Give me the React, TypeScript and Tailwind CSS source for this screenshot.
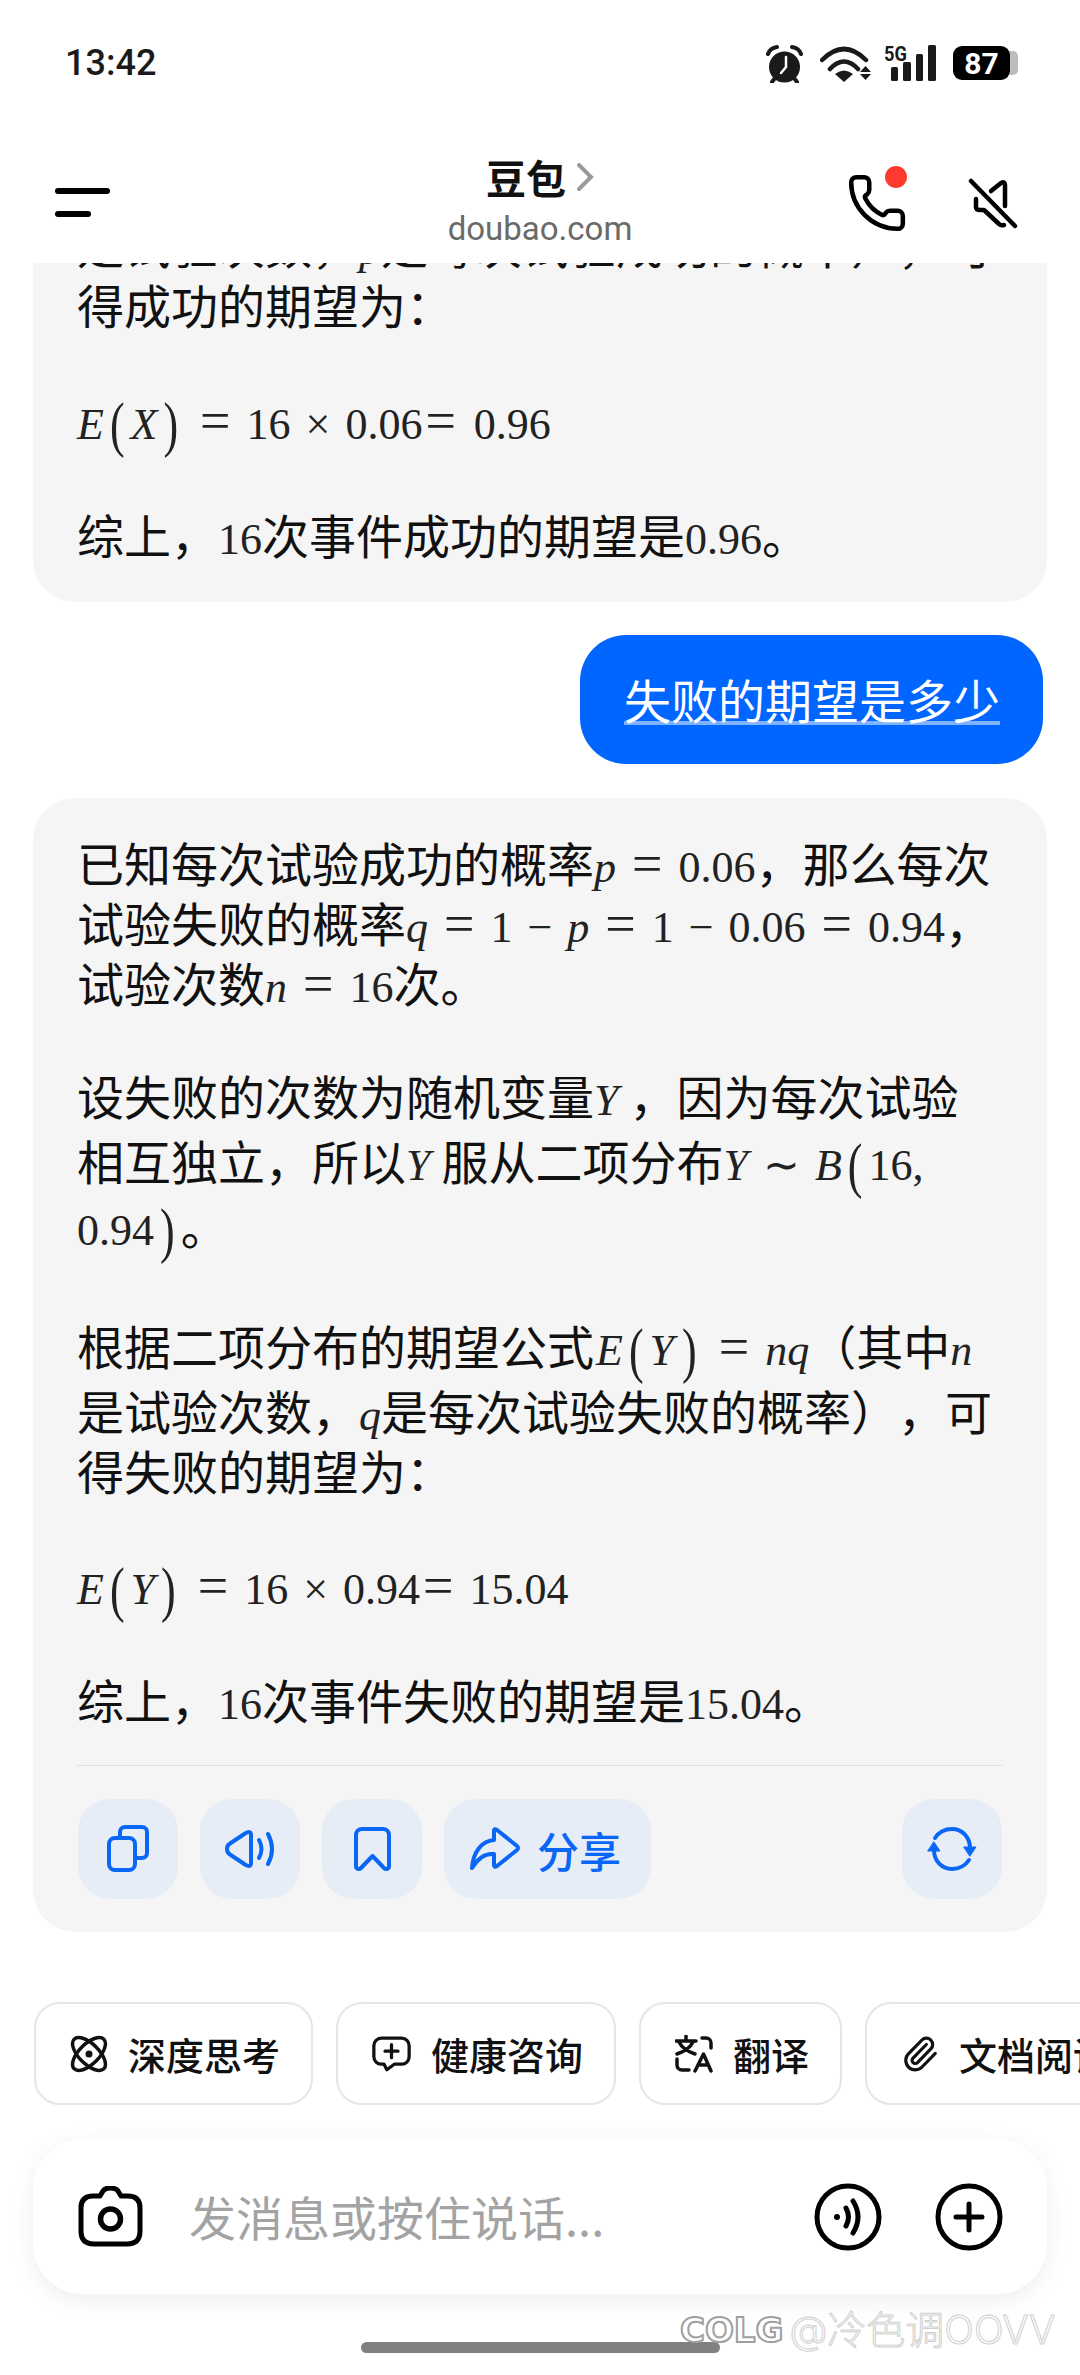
import { Paperclip, Phone } from "lucide-react";
import type { ReactNode } from "react";

function M({ children }: { children: ReactNode }) {
  return <span className="font-['Liberation_Serif',serif] text-[44px] text-[#222]">{children}</span>;
}

function V({ children, className = "" }: { children: ReactNode; className?: string }) {
  return <span className={"font-['Liberation_Serif',serif] text-[44px] text-[#222] italic " + className}>{children}</span>;
}

function Eq({ l = 16, r = 16 }: { l?: number; r?: number }) {
  return (
    <span
      className="font-['Liberation_Serif',serif] text-[54px] leading-[0] text-[#222]"
      style={{ marginLeft: l, marginRight: r }}
    >
      =
    </span>
  );
}

function Op({ children }: { children: ReactNode }) {
  return <span className="mx-[15px] font-['Liberation_Serif',serif] text-[44px] text-[#222]">{children}</span>;
}

function Paren({ children }: { children: ReactNode }) {
  return (
    <span className="mx-[6px] inline-block scale-y-[1.4] font-['Liberation_Serif',serif] text-[44px] leading-[0] text-[#222]">
      {children}
    </span>
  );
}

function Line({ children, className = "h-[60px] leading-[60px]" }: { children: ReactNode; className?: string }) {
  return <div className={"whitespace-nowrap " + className}>{children}</div>;
}

function Alarm() {
  return (
    <svg width="37" height="39" viewBox="0 0 37 39">
      <circle cx="18.5" cy="23" r="15.5" fill="#1a1a1a" />
      <path d="M2 10Q4 4 11 3M35 10Q33 4 26 3" stroke="#1a1a1a" strokeWidth="4" fill="none" strokeLinecap="round" />
      <path d="M9 34L6 38M28 34L31 38" stroke="#1a1a1a" strokeWidth="4" strokeLinecap="round" />
      <path d="M20 13V23L15 29" stroke="#fff" strokeWidth="2.5" fill="none" strokeLinecap="round" />
    </svg>
  );
}

function Wifi() {
  return (
    <svg width="52" height="38" viewBox="0 0 52 38">
      <path d="M2 16Q24 -6 46 16M10 25Q24 10 38 25" stroke="#1a1a1a" strokeWidth="4.5" fill="none" strokeLinecap="round" />
      <path d="M15 30Q24 23 33 30L24 38Z" fill="#1a1a1a" />
      <path d="M40 28L45.500 22L51 28ZM40 30L45.500 36L51 30Z" fill="#1a1a1a" />
    </svg>
  );
}

function Signal() {
  return (
    <svg width="51" height="38" viewBox="0 0 51 38">
      <text x="-1" y="17" fontSize="21" fontWeight="700" fontFamily="Roboto, sans-serif" fill="#1a1a1a" textLength="23" lengthAdjust="spacingAndGlyphs">
        5G
      </text>
      <rect x="6" y="23" width="7" height="14" rx="1.500" fill="#1a1a1a" />
      <rect x="18" y="18" width="8" height="19" rx="1.500" fill="#1a1a1a" />
      <rect x="31" y="10" width="7" height="27" rx="1.500" fill="#1a1a1a" />
      <rect x="43" y="1" width="8" height="36" rx="1.500" fill="#1a1a1a" />
    </svg>
  );
}

function ActionButton({ children }: { children: ReactNode }) {
  return <div className="flex h-[100px] w-[100px] items-center justify-center rounded-[32px] bg-[#e6edf7]">{children}</div>;
}

function Chip({ icon, label }: { icon: ReactNode; label: string }) {
  return (
    <div className="flex h-[103px] shrink-0 items-center gap-[20px] rounded-[26px] border-2 border-[#e6e6e6] bg-white pr-[31px] pl-[34px] text-[38px] font-medium text-[#111]">
      {icon}
      <span>{label}</span>
    </div>
  );
}

function ChatCard() {
  return (
    <div className="mt-[-49px] rounded-b-[42px] bg-[#f5f5f5] pr-[32px] pb-[38px] pl-[44px]">
      <Line>
        是试验次数，<V>p</V>是每次试验成功的概率），可
      </Line>
      <Line>得成功的期望为：</Line>
      <Line className="mt-[55px] h-[60px] leading-[60px]">
        <V>E</V>
        <Paren>(</Paren>
        <V>X</V>
        <Paren>)</Paren>
        <Eq />
        <M>16</M>
        <Op>×</Op>
        <M>0.06</M>
        <Eq l={3} r={18} />
        <M>0.96</M>
      </Line>
      <Line className="mt-[55px] h-[60px] leading-[60px]">
        综上，<M>16</M>次事件成功的期望是<M>0.96</M>。
      </Line>
    </div>
  );
}

export default function App() {
  return (
    <div className="relative flex h-[2375px] w-[1080px] flex-col overflow-hidden bg-white pb-[22px] font-['Noto_Sans_CJK_SC',sans-serif] text-[47px] text-[#111] [text-spacing-trim:space-all]">
      <div className="flex h-[126px] shrink-0 items-center justify-between pr-[62px] pl-[65px]">
        <span className="font-['Roboto',sans-serif] text-[36px] font-medium text-[#1a1a1a]">13:42</span>
        <div className="flex items-center">
          <Alarm />
          <div className="ml-[17px]">
            <Wifi />
          </div>
          <div className="ml-[13px]">
            <Signal />
          </div>
          <div className="ml-[17px] flex items-center">
            <div className="flex h-[34px] w-[57px] items-center justify-center rounded-[9px] bg-black font-['Roboto',sans-serif] text-[30px] font-bold text-white">
              87
            </div>
            <div className="h-[24px] w-[8px] rounded-r-[5px] bg-[#bcbcbc]" />
          </div>
        </div>
      </div>

      <div className="grid h-[137px] shrink-0 grid-cols-[1fr_auto_1fr]">
        <div className="flex flex-col gap-[17px] pt-[62px] pl-[55px]">
          <div className="h-[6px] w-[55px] rounded-full bg-black" />
          <div className="h-[6px] w-[36px] rounded-full bg-black" />
        </div>
        <div className="flex flex-col items-center pt-[27px]">
          <div className="flex h-[48px] items-center text-[40px] leading-[48px] font-bold text-[#111]">
            豆包
            <svg className="ml-[10px]" width="18" height="30" viewBox="0 0 18 30">
              <path d="M3 3L15 15L3 27" stroke="#9a9a9a" strokeWidth="4" fill="none" strokeLinecap="round" />
            </svg>
          </div>
          <div className="mt-[4px] font-['Roboto',sans-serif] text-[33px] leading-[48px] text-[#6a6a6a]">doubao.com</div>
        </div>
        <div className="flex justify-end pt-[46px] pr-[62px]">
          <div className="relative h-[62px] w-[62px]">
            <Phone size={62} strokeWidth={1.750} className="text-black" />
            <div className="absolute top-[-6px] right-[1px] h-[22px] w-[22px] rounded-full bg-[#ff3b30]" />
          </div>
          <svg className="mt-[5px] ml-[60px]" width="50" height="52" viewBox="0 0 50 52" fill="none" stroke="black" strokeWidth="4.500" strokeLinecap="round" strokeLinejoin="round">
            <path d="M3 4L47 49" />
            <path d="M23 14L33 6Q37 4 37 8V29" />
            <path d="M8 22V30Q8 33 12 33H16L31 47Q33 49 36 48" />
          </svg>
        </div>
      </div>

      <div className="min-h-0 flex-1 overflow-hidden px-[33px]">
        <ChatCard />

        <div className="mt-[33px] flex justify-end pr-[4px]">
          <div className="h-[129px] w-[463px] rounded-[46px] bg-[#0066ff] pt-[42px] pl-[44px] text-white">
            <span className="block w-fit border-b-[4px] border-white/50 leading-[44px]">失败的期望是多少</span>
          </div>
        </div>

        <div className="mt-[34px] rounded-[42px] bg-[#f5f5f5] pt-[34px] pr-[45px] pb-[33px] pl-[44px]">
          <Line>
            已知每次试验成功的概率<V>p</V>
            <Eq />
            <M>0.06</M>，那么每次
          </Line>
          <Line>
            试验失败的概率<V>q</V>
            <Eq />
            <M>1</M>
            <Op>−</Op>
            <V>p</V>
            <Eq />
            <M>1</M>
            <Op>−</Op>
            <M>0.06</M>
            <Eq />
            <M>0.94</M>，
          </Line>
          <Line>
            试验次数<V>n</V>
            <Eq />
            <M>16</M>次。
          </Line>

          <Line className="mt-[50px] h-[65px] leading-[65px]">
            设失败的次数为随机变量<V className="mr-[11px]">Y</V>，因为每次试验
          </Line>
          <Line className="h-[65px] leading-[65px]">
            相互独立，所以<V className="mr-[11px]">Y</V>服从二项分布<V>Y</V>
            <Op>∼</Op>
            <V>B</V>
            <Paren>(</Paren>
            <M>16,</M>
          </Line>
          <Line className="h-[65px] leading-[65px]">
            <M>0.94</M>
            <Paren>)</Paren>。
          </Line>

          <Line className="mt-[55px] h-[65px] leading-[65px]">
            根据二项分布的期望公式<V className="ml-[2px]">E</V>
            <Paren>(</Paren>
            <V className="mr-[2px]">Y</V>
            <Paren>)</Paren>
            <Eq />
            <V>nq</V>（其中<V>n</V>
          </Line>
          <Line className="h-[65px] leading-[65px]">
            是试验次数，<V>q</V>是每次试验失败的概率），可
          </Line>
          <Line className="h-[55px] leading-[55px]">得失败的期望为：</Line>

          <Line className="mt-[57px] h-[60px] leading-[60px]">
            <V>E</V>
            <Paren>(</Paren>
            <V>Y</V>
            <Paren>)</Paren>
            <Eq />
            <M>16</M>
            <Op>×</Op>
            <M>0.94</M>
            <Eq l={3} />
            <M>15.04</M>
          </Line>
          <Line className="mt-[55px] h-[60px] leading-[60px]">
            综上，<M>16</M>次事件失败的期望是<M>15.04</M>。
          </Line>

          <div className="mt-[36px] h-[1px] w-[925px] bg-[#e0e0e0]" />

          <div className="mt-[33px] flex w-[925px] justify-between pl-[1px]">
            <div className="flex gap-[22px]">
              <ActionButton>
                <svg width="48" height="50" viewBox="0 0 48 50" fill="none" stroke="#0a66f5" strokeWidth="4" strokeLinecap="round">
                  <rect x="5" y="14" width="26" height="32" rx="6" />
                  <path d="M16 12V8a5 5 0 0 1 5-5h17a5 5 0 0 1 5 5v21a5 5 0 0 1-5 5h-7" />
                </svg>
              </ActionButton>
              <ActionButton>
                <svg width="56" height="48" viewBox="0 0 56 48" fill="none" stroke="#0a66f5" strokeWidth="4" strokeLinecap="round" strokeLinejoin="round">
                  <path d="M23 8.500L8 18.500Q5 20 5 24Q5 28 8 29.500L23 39.500Q29 43 29 38V10Q29 5 23 8.500Z" />
                  <path d="M37 15Q42 24 37 33" />
                  <path d="M46 9Q54 24 46 39" />
                </svg>
              </ActionButton>
              <ActionButton>
                <svg width="48" height="48" viewBox="0 0 48 48" fill="none" stroke="#0a66f5" strokeWidth="4" strokeLinejoin="round">
                  <path d="M8 41V10a6 6 0 0 1 6-6h21a6 6 0 0 1 6 6v31c0 3-3 4-5 2L24.500 31L13 43c-2 2-5 1-5-2Z" />
                </svg>
              </ActionButton>
              <div className="flex h-[100px] items-center gap-[17px] rounded-[32px] bg-[#e6edf7] pr-[30px] pl-[26px] text-[42px] font-medium text-[#0a66f5]">
                <svg width="50" height="48" viewBox="0 0 50 48" fill="none" stroke="#0a66f5" strokeWidth="4" strokeLinejoin="round">
                  <path d="M2 43C3 28 11 16 24 15V6Q24 3 27 5L47 21Q49 23 47 25L27 41Q24 43 24 40V29C15 28 8 33 2 43Z" />
                </svg>
                分享
              </div>
            </div>
            <ActionButton>
              <svg width="54" height="46" viewBox="0 0 54 46" fill="none" stroke="#0a66f5" strokeWidth="4" strokeLinecap="round">
                <path d="M10 12C14 6 20 3 27 3C37 3 45 11 45 22" />
                <path d="M44 34C40 40 34 43 27 43C17 43 9 35 9 24" />
                <path d="M39 21H51L45 30ZM3 25H15L9 16Z" fill="#0a66f5" strokeWidth="1" strokeLinejoin="round" />
              </svg>
            </ActionButton>
          </div>
        </div>
      </div>

      <div className="flex shrink-0 gap-[23px] overflow-hidden pl-[34px]">
        <Chip
          label="深度思考"
          icon={
            <svg width="38" height="38" viewBox="0 0 38 38" fill="none" stroke="#111" strokeWidth="3.500">
              <ellipse cx="19" cy="19" rx="10" ry="21" transform="rotate(45 19 19)" />
              <ellipse cx="19" cy="19" rx="10" ry="21" transform="rotate(-45 19 19)" />
              <circle cx="19" cy="19" r="3.500" fill="#111" stroke="none" />
            </svg>
          }
        />
        <Chip
          label="健康咨询"
          icon={
            <svg width="39" height="38" viewBox="0 0 42 38" fill="none" stroke="#111" strokeWidth="3.500" strokeLinecap="round" strokeLinejoin="round">
              <path d="M10 2H32a8 8 0 0 1 8 8V22a8 8 0 0 1-8 8H24L16 36L13 30H10a8 8 0 0 1-8-8V10a8 8 0 0 1 8-8Z" />
              <path d="M14 16H28M21 9V23" />
            </svg>
          }
        />
        <Chip
          label="翻译"
          icon={
            <svg width="38" height="38" viewBox="0 0 38 38" fill="none" stroke="#111" strokeWidth="3.500" strokeLinecap="round" strokeLinejoin="round">
              <path d="M1 6H21M11 1V6M4 7Q8 15 20 19M18 7Q14 15 2 19" />
              <path d="M27 3H31a5 5 0 0 1 5 5V13" />
              <path d="M2 24V30a5 5 0 0 0 5 5H14" />
              <path d="M20 36L28.500 19L36 36M23 30H33" />
            </svg>
          }
        />
        <Chip label="文档阅读" icon={<Paperclip size={38} strokeWidth={2} className="text-[#111]" />} />
      </div>

      <div className="mx-[33px] mt-[34px] flex h-[155px] shrink-0 items-center rounded-[50px] bg-white pr-[44px] pl-[45px] shadow-[0_6px_24px_rgba(0,0,0,0.07)]">
        <svg width="65" height="61" viewBox="0 0 65 61" fill="none" stroke="#000" strokeWidth="5" strokeLinejoin="round">
          <path d="M22 10L25 5Q27 2 32 2Q38 2 40 5L43 10H50Q62 10 62 22V45Q62 58 49 58H16Q3 58 3 45V22Q3 10 15 10Z" />
          <circle cx="32.500" cy="33" r="10" strokeWidth="5.500" />
        </svg>
        <span className="ml-[46px] flex-1 text-[#a3a3a3]">发消息或按住说话...</span>
        <svg width="68" height="68" viewBox="0 0 68 68" fill="none" stroke="#000" strokeWidth="5" strokeLinecap="round">
          <circle cx="34" cy="34" r="31" />
          <circle cx="23" cy="34" r="3" fill="#000" stroke="none" />
          <path d="M32 25Q37 34 32 43" />
          <path d="M39 18Q49 34 39 50" />
        </svg>
        <svg className="ml-[53px]" width="68" height="68" viewBox="0 0 68 68" fill="none" stroke="#000" strokeWidth="5" strokeLinecap="round">
          <circle cx="34" cy="34" r="31" />
          <path d="M21 34H47M34 21V47" />
        </svg>
      </div>

      <div className="mx-auto mt-[48px] h-[11px] w-[359px] shrink-0 rounded-full bg-[#808080]" />

      <div className="absolute top-[2304px] left-[680px] flex h-[52px] items-center gap-[6px] whitespace-nowrap">
        <span className="font-['DejaVu_Sans',sans-serif] text-[34px] font-bold text-white [-webkit-text-stroke:2px_#a0a0a0]">
          COLG
        </span>
        <span className="font-['Inter','Noto_Sans_CJK_SC',sans-serif] text-[39px] font-light text-white [-webkit-text-stroke:1px_#d0d0d0]">
          @冷色调OOVV
        </span>
      </div>
    </div>
  );
}
